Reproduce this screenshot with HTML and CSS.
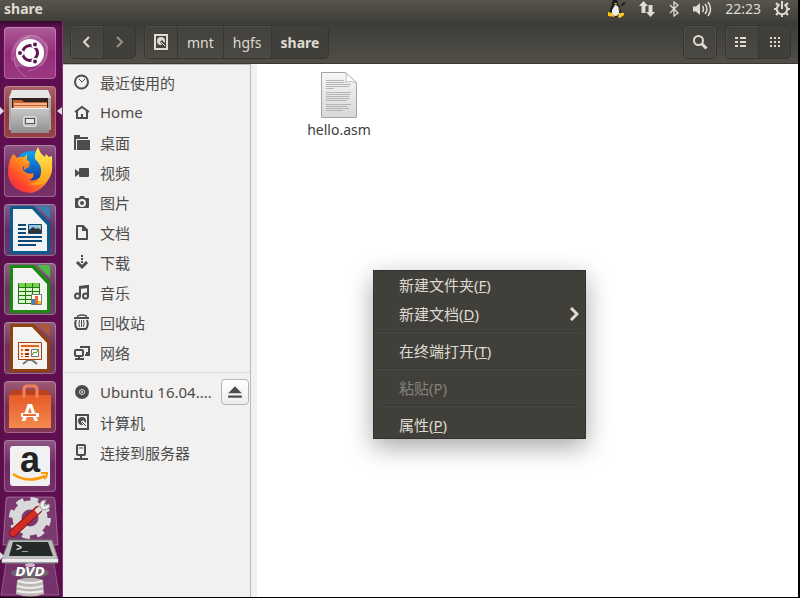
FILE: index.html
```
<!DOCTYPE html>
<html lang="zh-CN">

<head>
    <meta charset="UTF-8">
    <meta name="viewport" content="width=device-width, initial-scale=1.0">
    <title>share</title>
    <link rel="stylesheet" href="styles.css">
</head>

<body>

    <!-- Top panel -->
    <header class="panel">
        <span class="panel-title">share</span>
        <div class="indicators">
            <svg width="20" height="20" viewBox="0 0 20 20">
                <path d="M6 6Q6 0 9 0t3 5q3 4 3 8t-5 5-6-3 2-9z" fill="#1b1b1b"/>
                <path d="M9 6q3 0 4 4 1 6-3 7-5 0-4-6z" fill="#eee"/>
                <path d="M8 4h3l-1 2z" fill="#f6b91c"/>
                <path d="M2 13l4 1 3 4-7-1zM12 18l1-4 5 0 0 2-4 3z" fill="#fcc521"/>
                <path d="M13 11l4-6 2-1" stroke="#222" stroke-width="2" fill="none"/>
                <path d="M13 11l3-4" stroke="#b4602b" stroke-width="1"/>
            </svg>
            <svg width="18" height="18" viewBox="0 0 18 18" fill="#dfdbd2">
                <path d="M5.500 1L10 6H7.500v7h-4V6H1zM12.500 17L8 12h2.500V5h4v7H17z"/>
            </svg>
            <svg width="12" height="18" viewBox="0 0 12 18" fill="none" stroke="#dfdbd2" stroke-width="1.300">
                <path d="M2 5l8 8-4 3V2l4 3-8 8"/>
            </svg>
            <svg width="21" height="18" viewBox="0 0 21 18" fill="none" stroke="#dfdbd2" stroke-width="1.500">
                <path d="M1 6.500h3L8 3v12l-4-3.500H1z" fill="#dfdbd2" stroke="none"/>
                <path d="M10.500 6q2 3 0 6M13 4q4 5 0 10M16 2q5 7 0 14"/>
            </svg>
            <span class="clock">22:23</span>
            <svg width="18" height="18" viewBox="0 0 18 18" fill="none" stroke="#dfdbd2">
                <path d="M6.500 4.500a5.200 5.200 0 1 0 5 0" stroke-width="2"/>
                <path d="M9 1v8" stroke-width="2"/>
                <path d="M1 9h3M14 9h3M9 14v3M3 3l2 2M15 3l-2 2M3 15l2-2M15 15l-2-2" stroke-width="2"/>
            </svg>
        </div>
    </header>

    <div class="desktop">

        <!-- Launcher -->
        <nav class="launcher">
            <button type="button" class="tile tile-dash" aria-label="Dash">
                <svg viewBox="0 0 52 52">
                    <path d="M12 40C2 22 14 6 28 8c10 1 17 10 16 20-1 4-3 8-6 11z" fill="#fff" fill-opacity=".15"/>
                    <path d="M20 12C26 4 40 10 44 22M42 16c4 14-4 26-18 28M8 34c-2-12 6-22 18-24M10 30c0 10 6 16 12 20" fill="none" stroke="#fff" stroke-opacity=".25" stroke-width="1"/>
                    <circle cx="26" cy="26" r="14" fill="#fff"/>
                    <circle cx="26" cy="26" r="7.500" fill="none" stroke="#5e1650" stroke-width="3"/>
                    <circle cx="17" cy="26" r="3" fill="#fff"/>
                    <circle cx="30.500" cy="18.200" r="3" fill="#fff"/>
                    <circle cx="30.500" cy="33.800" r="3" fill="#fff"/>
                    <circle cx="16" cy="26" r="2" fill="#5e1650"/>
                    <circle cx="31" cy="17.500" r="2" fill="#5e1650"/>
                    <circle cx="31" cy="34.500" r="2" fill="#5e1650"/>
                </svg>
            </button>
            <button type="button" class="tile tile-files running active" aria-label="Files">
                <svg viewBox="0 0 52 52">
                    <defs>
                        <linearGradient id="steel" x1="0" y1="0" x2="0" y2="1">
                            <stop offset="0" stop-color="#c9c9c9"/>
                            <stop offset="1" stop-color="#8f8f8f"/>
                        </linearGradient>
                    </defs>
                    <path d="M8 4h36l3 8v32H5V12z" fill="#a9a9a9"/>
                    <path d="M8 4h36l3 8H5z" fill="#e6e6e6"/>
                    <path d="M8 12h36v12H8z" fill="#2d2220"/>
                    <path d="M9 14h9l2 2h23v7H9z" fill="#c9602a"/>
                    <path d="M10 17h33v2H10zM10 20h33v2H10z" fill="#f4b38a"/>
                    <path d="M7 22h38v25H7z" fill="url(#steel)"/>
                    <path d="M7 22h38v1H7z" fill="#ececec"/>
                    <rect x="19.500" y="30.500" width="13" height="10" rx="2" fill="#c4c4c4" stroke="#dedede"/>
                    <rect x="21.500" y="32.500" width="9" height="5" fill="#e8e8e8" stroke="#555"/>
                </svg>
            </button>
            <button type="button" class="tile" aria-label="Firefox">
                <svg viewBox="0 0 52 52">
                    <defs>
                        <linearGradient id="fox" x1="1" y1="0" x2="0" y2="1">
                            <stop offset="0" stop-color="#fff04a"/>
                            <stop offset=".4" stop-color="#ff9a1c"/>
                            <stop offset=".7" stop-color="#ff4a2d"/>
                            <stop offset="1" stop-color="#e3175a"/>
                        </linearGradient>
                        <linearGradient id="globe" x1="0" y1="0" x2="0" y2="1">
                            <stop offset="0" stop-color="#0aa5f2"/>
                            <stop offset="1" stop-color="#1a2a94"/>
                        </linearGradient>
                        <linearGradient id="tail" x1="0" y1="0" x2="0" y2="1">
                            <stop offset="0" stop-color="#fff35a"/>
                            <stop offset="1" stop-color="#ff9c16"/>
                        </linearGradient>
                    </defs>
                    <circle cx="27" cy="23" r="17" fill="url(#globe)"/>
                    <path d="M9 9q3 2 4 4 4-2 7-1l3-3v6q3 2 3 3l-6 3q-3 2 0 5 4 4 9 2 2 5-4 7 8 2 13-5 4-7-2-15l12-4q2 30-20 37Q6 47 4 29 4 16 9 9z" fill="url(#fox)"/>
                    <path d="M34 2q-4 7-3 12 7 6 6 14-1 10-12 11 15 4 21-7 5-10-1-20-2-2-3-3-1 2-1 3-5-3-7-10z" fill="url(#tail)"/>
                    <path d="M20 21l6-3-1 4-5 3z" fill="#ff7a20"/>
                </svg>
            </button>
            <button type="button" class="tile tile-writer" aria-label="Writer">
                <svg viewBox="0 0 52 52">
                    <path d="M8 2h22l16 17v29q0 2-2 2H8q-2 0-2-2V4q0-2 2-2z" fill="#0d5a8c"/>
                    <path d="M33 2h11q2 0 2 2v11z" fill="#3c7fae"/>
                    <path d="M9 5h19l15 16v26H9z" fill="#f3f3f3"/>
                    <path d="M14 20h8v2h-8zM14 24h8v2h-8zM14 28h8v2h-8zM14 32h24v2H14zM14 36h24v2H14zM14 40h18v2H14z" fill="#0d4a78"/>
                    <path d="M24.500 20.500h13v9h-13z" fill="#8fc3ea" stroke="#0d4a78"/>
                    <path d="M25 29v-3l4-3 3 2 2-1 3 2v3z" fill="#333"/>
                    <circle cx="35.500" cy="22.500" r="1" fill="#f6d437"/>
                </svg>
            </button>
            <button type="button" class="tile tile-calc" aria-label="Calc">
                <svg viewBox="0 0 52 52">
                    <path d="M8 2h22l16 17v29q0 2-2 2H8q-2 0-2-2V4q0-2 2-2z" fill="#1c8a12"/>
                    <path d="M33 2h11q2 0 2 2v11z" fill="#54b844"/>
                    <path d="M9 5h19l15 16v26H9z" fill="#f3f3f3"/>
                    <path d="M14.500 20.500h21v20h-21z" fill="#d9f7c8" stroke="#1c7a12"/>
                    <path d="M15 20h20v4H15z" fill="#75d34e"/>
                    <path d="M14 24.500h21M14 28.500h21M14 32.500h21M14 36.500h21M21.500 20v20M28.500 20v20" stroke="#1c7a12" fill="none"/>
                    <path d="M27.500 31.500h10v10h-10z" fill="#fff" stroke="#777"/>
                    <path d="M28 36h3v5h-3z" fill="#2f8bd0"/>
                    <path d="M31 33h3v8h-3z" fill="#ef6a1e"/>
                    <path d="M34 38h3v3h-3z" fill="#f3c521"/>
                </svg>
            </button>
            <button type="button" class="tile tile-impress" aria-label="Impress">
                <svg viewBox="0 0 52 52">
                    <path d="M8 2h22l16 17v29q0 2-2 2H8q-2 0-2-2V4q0-2 2-2z" fill="#91400f"/>
                    <path d="M33 2h11q2 0 2 2v11z" fill="#a9583a"/>
                    <path d="M9 5h19l15 16v26H9z" fill="#f3f3f3"/>
                    <path d="M19 42l5-4h4l5 4" fill="none" stroke="#777" stroke-width="2"/>
                    <path d="M14.500 20.500h23v17h-23z" fill="#fdece2" stroke="#a8420d"/>
                    <path d="M17 23h18v2H17z" fill="#e0641f"/>
                    <path d="M17 27h2v2h-2zM17 31h2v2h-2zM17 34h2v1h-2z" fill="#e0641f"/>
                    <path d="M21 27h4v2h-4zM21 31h4v2h-4zM21 34h4v1h-4z" fill="#8a3a0d"/>
                    <path d="M27.500 27.500h7v7h-7z" fill="#fff" stroke="#777"/>
                    <path d="M28 33l2-3 2 1 2-3" fill="none" stroke="#2c9a20"/>
                </svg>
            </button>
            <button type="button" class="tile tile-software" aria-label="Software">
                <svg viewBox="0 0 52 52">
                    <defs>
                        <linearGradient id="bag" x1="0" y1="0" x2="0" y2="1">
                            <stop offset="0" stop-color="#e55a27"/>
                            <stop offset="1" stop-color="#f48a4d"/>
                        </linearGradient>
                    </defs>
                    <path d="M8 9h36l3 6H5z" fill="#b9431f"/>
                    <path d="M5 14h42v33H5z" fill="url(#bag)"/>
                    <path d="M20 17V9q0-4 3-4h7q3 0 3 4v8" fill="none" stroke="#f0825b" stroke-width="3"/>
                    <text x="26" y="40" text-anchor="middle" class="bag-letter">A</text>
                    <path d="M17 32h18v4H17z" fill="#fff"/>
                    <path d="M19 33h13v2H19z" fill="#e86d35"/>
                </svg>
            </button>
            <button type="button" class="tile tile-amazon" aria-label="Amazon">
                <svg viewBox="0 0 52 52">
                    <rect x="6" y="6" width="40" height="40" rx="3" fill="#f1f1f1"/>
                    <text x="26" y="32" text-anchor="middle" class="amazon-letter">a</text>
                    <path d="M9 34q15 10 32 2" fill="none" stroke="#f90" stroke-width="2.500"/>
                    <path d="M37 33h6q0 4-3 6" fill="none" stroke="#f90" stroke-width="2"/>
                </svg>
            </button>
            <!-- Folded items at the end of the launcher -->
            <button type="button" class="stack" aria-label="Settings, Terminal, DVD">
                <svg viewBox="0 0 62 100">
                    <path d="M8-2h44q3 0 3 3l3 45H3L6 1q0-3 2-3z" fill="#fff" fill-opacity=".18" stroke="#fff" stroke-opacity=".3"/>
                    <circle cx="30" cy="19" r="13" fill="none" stroke="#d9d9d9" stroke-width="9"/>
                    <circle cx="30" cy="19" r="18.500" fill="none" stroke="#d9d9d9" stroke-width="5" stroke-dasharray="7.500 7.030"/>
                    <path d="M13 34L38 11" stroke="#8e1513" stroke-width="8" stroke-linecap="round"/>
                    <path d="M13 34L38 11" stroke="#d32b25" stroke-width="6" stroke-linecap="round"/>
                    <path d="M36 13l8-7" stroke="#ddd" stroke-width="5"/>
                    <path d="M46 1q-7 0-6 7 3 5 9 1 1-2 0-4l-5 2 1-4z" fill="#eee" stroke="#999"/>
                    <path d="M6 64h48l5 32H1z" fill="#fff" fill-opacity=".15" stroke="#fff" stroke-opacity=".25"/>
                    <path d="M17 81q13-5 26 0l1 14q-14 5-28 0z" fill="#bdb8b3"/>
                    <path d="M18 82q12 4 24 0M17 87q13 4 26 0M17 92q13 3 26 0" fill="none" stroke="#eee" stroke-width="2"/>
                    <path d="M9 41h43l6 19v4H2v-4z" fill="#bdbdbd" stroke="#777"/>
                    <path d="M2 60h56v3H2z" fill="#ececec"/>
                    <path d="M13 43h35l5 14H9z" fill="#252a2b"/>
                    <text x="16" y="52" class="prompt">&gt;_</text>
                    <ellipse cx="30" cy="66" rx="5" ry="2" fill="#ccb5c8"/>
                    <ellipse cx="30" cy="74" rx="19" ry="5" fill="#6e6470"/>
                    <text x="30" y="77" text-anchor="middle" class="dvd">DVD</text>
                    <path d="M0 53l4 4-4 4z" fill="#ddd"/>
                </svg>
            </button>
        </nav>

        <!-- Files window -->
        <main class="window">
            <div class="toolbar">
                <div class="group">
                    <button type="button" class="tool" aria-label="Back">
                        <svg width="16" height="16" viewBox="0 0 16 16"><path d="M10 3L5 8l5 5" fill="none" stroke="#dfdbd2" stroke-width="2"/></svg>
                    </button>
                    <button type="button" class="tool pressed" aria-label="Forward" disabled>
                        <svg width="16" height="16" viewBox="0 0 16 16"><path d="M5 3l5 5-5 5" fill="none" stroke="#96938b" stroke-width="2"/></svg>
                    </button>
                </div>
                <div class="group path">
                    <button type="button" class="tool" aria-label="Computer">
                        <svg width="16" height="16" viewBox="0 0 16 16">
                            <path d="M2 1h12v14H2z" fill="none" stroke="#dfdbd2" stroke-width="2"/>
                            <circle cx="8" cy="7" r="4" fill="#dfdbd2"/>
                            <path d="M8 7l4 5" stroke="#44423c" stroke-width="3"/>
                            <path d="M8 8l4 4" stroke="#dfdbd2" stroke-width="1"/>
                        </svg>
                    </button>
                    <button type="button" class="tool crumb">mnt</button>
                    <button type="button" class="tool crumb">hgfs</button>
                    <button type="button" class="tool crumb current">share</button>
                </div>
                <div class="group search">
                    <button type="button" class="tool" aria-label="Search">
                        <svg width="16" height="16" viewBox="0 0 16 16" fill="none" stroke="#dfdbd2">
                            <circle cx="6.500" cy="6.500" r="4.500" stroke-width="2"/>
                            <path d="M10 10l4.500 4.500" stroke-width="3"/>
                        </svg>
                    </button>
                </div>
                <div class="group">
                    <button type="button" class="tool" aria-label="List view">
                        <svg width="16" height="16" viewBox="0 0 16 16" fill="#dfdbd2">
                            <path d="M1 3h3v2H1zM6 3h6v2H6zM1 7h3v2H1zM6 7h6v2H6zM1 11h3v2H1zM6 11h6v2H6z"/>
                        </svg>
                    </button>
                    <button type="button" class="tool pressed" aria-label="Icon view">
                        <svg width="16" height="16" viewBox="0 0 16 16" fill="#dfdbd2">
                            <path d="M3 3h2v2H3zM7 3h2v2H7zM11 3h2v2h-2zM3 7h2v2H3zM7 7h2v2H7zM11 7h2v2h-2zM3 11h2v2H3zM7 11h2v2H7zM11 11h2v2h-2z"/>
                        </svg>
                    </button>
                </div>
            </div>

            <div class="content">
                <aside class="sidebar">
                    <ul class="places">
                        <li><a href="#">
                            <svg viewBox="0 0 16 16"><circle cx="7.500" cy="8" r="6.500" fill="none" stroke="#4c4c4c" stroke-width="2"/><path d="M5 5l3 3 3-3" fill="none" stroke="#4c4c4c"/></svg>
                            最近使用的</a></li>
                        <li><a href="#">
                            <svg viewBox="0 0 16 16"><path d="M1 8l7-5 7 5" fill="none" stroke="#4c4c4c" stroke-width="2"/><path d="M3 7v7h10V7" fill="none" stroke="#4c4c4c" stroke-width="2"/><path d="M7 10h2v4H7z" fill="#4c4c4c"/></svg>
                            Home</a></li>
                        <li><a href="#">
                            <svg viewBox="0 0 16 16" fill="#4c4c4c"><path d="M0 1h6v2h8v2H2v11H0zM3 6h13v10H3z"/></svg>
                            桌面</a></li>
                        <li><a href="#">
                            <svg viewBox="0 0 16 16" fill="#4c4c4c"><path d="M1 5l4 3v2l-4 3z"/><rect x="5" y="4" width="10" height="9" rx="1"/></svg>
                            视频</a></li>
                        <li><a href="#">
                            <svg viewBox="0 0 16 16"><path d="M2 4h3l1-2h4l1 2h3q1 0 1 1v8q0 1-1 1H2q-1 0-1-1V5q0-1 1-1z" fill="#4c4c4c"/><circle cx="8" cy="9" r="3" fill="none" stroke="#f2f1f0" stroke-width="2"/></svg>
                            图片</a></li>
                        <li><a href="#">
                            <svg viewBox="0 0 16 16"><path d="M3 2h6l4 4v9H3z" fill="none" stroke="#4c4c4c" stroke-width="2" stroke-linejoin="round"/><path d="M8 2v5h5z" fill="#4c4c4c"/></svg>
                            文档</a></li>
                        <li><a href="#">
                            <svg viewBox="0 0 16 16"><path d="M7 1h2v2H7zM7 4h2v2H7zM7 7h2v2H7z" fill="#4c4c4c"/><path d="M3 8l5 5 5-5" fill="none" stroke="#4c4c4c" stroke-width="3"/></svg>
                            下载</a></li>
                        <li><a href="#">
                            <svg viewBox="0 0 16 16" fill="none" stroke="#4c4c4c" stroke-width="2"><circle cx="3.500" cy="12" r="2.500"/><circle cx="11.500" cy="12" r="2.500"/><path d="M6 12V3l8-1v10M6 4l8-1"/></svg>
                            音乐</a></li>
                        <li><a href="#">
                            <svg viewBox="0 0 16 16" fill="none" stroke="#4c4c4c"><path d="M3.500 3q0-2 4.500-2t4.500 2" stroke-width="1.500"/><path d="M0 4h15" stroke-width="2"/><path d="M2 6q-2 5 1 9h9q3-4 1-9" stroke-width="2"/><path d="M5.500 6q-1 4 0 7M7.500 6v7M9.500 6q1 4 0 7"/></svg>
                            回收站</a></li>
                        <li><a href="#">
                            <svg viewBox="0 0 16 16" fill="none" stroke="#4c4c4c" stroke-width="2"><path d="M7 4V3h8v6h-3"/><rect x="1" y="6" width="8" height="6" rx="1"/><path d="M1 15h9M5 12v3M11 11h5" /></svg>
                            网络</a></li>
                    </ul>
                    <ul class="places devices">
                        <li><a href="#">
                            <svg viewBox="0 0 16 16"><circle cx="8" cy="8" r="7" fill="#4c4c4c"/><circle cx="8" cy="8" r="2.500" fill="#4c4c4c" stroke="#ddd"/><circle cx="8" cy="8" r="1" fill="#ddd"/></svg>
                            <span class="name">Ubuntu 16.04....</span></a>
                            <button type="button" class="eject" aria-label="Eject">
                                <svg width="14" height="14" viewBox="0 0 14 14" fill="#4c4c4c"><path d="M7 2l6 6H1zM1 10h12v2H1z"/></svg>
                            </button>
                        </li>
                        <li><a href="#">
                            <svg viewBox="0 0 16 16"><path d="M2 1h12v14H2z" fill="none" stroke="#4c4c4c" stroke-width="2"/><circle cx="8" cy="7" r="4" fill="#4c4c4c"/><path d="M8 7l4 5" stroke="#f2f1f0" stroke-width="3"/><path d="M8 8l4 4" stroke="#4c4c4c"/></svg>
                            计算机</a></li>
                        <li><a href="#">
                            <svg viewBox="0 0 16 16" fill="none" stroke="#4c4c4c" stroke-width="2"><rect x="3" y="1" width="8" height="10" rx="1"/><path d="M5 4h4" stroke-width="1"/><path d="M7 11v4M0 15h14"/></svg>
                            连接到服务器</a></li>
                    </ul>
                </aside>

                <section class="files">
                    <a href="#" class="file">
                        <svg width="36" height="46" viewBox="0 0 36 46">
                            <defs>
                                <linearGradient id="paper" x1="0" y1="0" x2="0" y2="1">
                                    <stop offset="0" stop-color="#f6f6f6"/>
                                    <stop offset="1" stop-color="#d8d8d8"/>
                                </linearGradient>
                            </defs>
                            <path d="M.5.5h24l11 10v35H.5z" fill="url(#paper)" stroke="#a5a5a5"/>
                            <path d="M24.500.5q2 5 0 10 6-2 11 0z" fill="#fff" stroke="#bbb"/>
                            <path d="M5 8.500h18M5 10.500h18M5 12.500h25M5 14.500h23M5 16.500h8M5 20.500h25M5 22.500h24M5 24.500h23M5 26.500h24M5 28.500h21M5 32.500h25M5 34.500h21M5 36.500h23M5 38.500h17" stroke="#b5b5b5"/>
                        </svg>
                        <span>hello.asm</span>
                    </a>
                </section>
            </div>
        </main>
    </div>

    <!-- Context menu -->
    <div class="menu" role="menu">
        <button type="button" role="menuitem">新建文件夹(<u>F</u>)</button>
        <button type="button" role="menuitem">新建文档(<u>D</u>)
            <svg width="10" height="14" viewBox="0 0 10 14"><path d="M2 1l6 6-6 6" fill="none" stroke="#dfdbd2" stroke-width="3"/></svg>
        </button>
        <hr>
        <button type="button" role="menuitem">在终端打开(<u>T</u>)</button>
        <hr>
        <button type="button" role="menuitem" disabled>粘贴(P)</button>
        <hr>
        <button type="button" role="menuitem">属性(<u>P</u>)</button>
    </div>

</body>

</html>
```

FILE: styles.css
```
* {
    box-sizing: border-box;
}

body {
    display: flex;
    flex-direction: column;
    height: 100vh;
    margin: 0;
    overflow: hidden;
    border-right: 2px solid #000;
    border-bottom: 1px solid #000;
    font-family: 'Noto Sans', 'Noto Sans CJK SC', sans-serif;
    font-size: 15px;
    color: #4c4c4c;
    background-color: #fff;
}

button {
    margin: 0;
    padding: 0;
    border: none;
    background: none;
    font: inherit;
    color: inherit;
}

a {
    color: inherit;
    text-decoration: none;
}

svg {
    display: block;
    flex: none;
}

/* Top panel */
.panel {
    display: flex;
    align-items: center;
    justify-content: space-between;
    height: 21px;
    padding: 0 7px 3px 4px;
    background: linear-gradient(#57544c, #403f3a);
    color: #dfdbd2;
}

.panel-title {
    font-size: 14px;
    line-height: 18px;
    font-weight: bold;
}

.indicators {
    display: flex;
    align-items: center;
    gap: 12px;
    line-height: 18px;
}

.clock {
    font-size: 14px;
}

.desktop {
    display: flex;
    flex: 1;
    min-height: 0;
}

/* Launcher */
.launcher {
    display: flex;
    flex-direction: column;
    gap: 7px;
    width: 63px;
    padding: 6px 0 0 4px;
    overflow: hidden;
    border-right: 1px solid #7d3872;
    background-color: #5f0f50;
    box-shadow: inset 0 5px 4px -2px #350a2d;
}

.launcher svg {
    overflow: visible;
}

.tile {
    flex: none;
    position: relative;
    width: 52px;
    height: 52px;
    border-radius: 4px;
    background: linear-gradient(rgba(255, 255, 255, 0.3), rgba(255, 255, 255, 0.1) 50%, rgba(255, 255, 255, 0.15));
    box-shadow: inset 0 0 0 1px rgba(255, 255, 255, 0.25);
}

.tile-dash {
    background-color: #8a156c;
}

.tile-files {
    background-color: #86202a;
}

.tile-writer {
    background-color: #4a1a58;
}

.tile-calc {
    background-color: #53244a;
}

.tile-impress {
    background-color: #601a40;
}

.tile-software {
    background-color: #70153c;
}

/* Small arrows next to a running application */
.running::before,
.active::after {
    content: '';
    position: absolute;
    top: 21px;
    border: 4px solid transparent;
}

.running::before {
    left: -4px;
    border-left-color: #ddd;
    border-right-width: 0;
}

.active::after {
    right: -6px;
    border-right-color: #ddd;
    border-right-width: 5px;
    border-left-width: 0;
}

.bag-letter {
    font: bold 24px 'Liberation Sans', sans-serif;
    fill: #fff;
}

.amazon-letter {
    font: bold 36px 'Liberation Sans', sans-serif;
    fill: #222;
}

.stack {
    flex: none;
    width: 62px;
    height: 100px;
    margin-left: -4px;
}

.prompt {
    font: bold 10px 'Liberation Mono', monospace;
    fill: #e8e8e8;
}

.dvd {
    font: italic bold 12px 'DejaVu Sans', sans-serif;
    fill: #fff;
}

/* Window */
.window {
    display: flex;
    flex-direction: column;
    flex: 1;
    min-width: 0;
}

.toolbar {
    display: flex;
    align-items: center;
    gap: 8px;
    height: 43px;
    padding: 0 7px;
    border-bottom: 1px solid #393834;
    background: linear-gradient(#3c3b37, #504e47);
    color: #dfdbd2;
}

.group {
    display: flex;
    height: 34px;
    border: 1px solid #36352f;
    border-radius: 5px;
    box-shadow: inset 0 0 0 1px #504e48;
    background: linear-gradient(#42413c, #4b4943);
}

.search {
    margin-left: auto;
}

.tool {
    display: flex;
    align-items: center;
    justify-content: center;
    width: 32px;
}

.tool + .tool {
    border-left: 1px solid #36352f;
}

.pressed {
    background-color: #403f3a;
    border-radius: 0 4px 4px 0;
}

.crumb {
    width: auto;
    padding: 0 9px;
    font-size: 14px;
}

.current {
    font-weight: bold;
    background-color: #403f3a;
    border-radius: 0 4px 4px 0;
}

.content {
    display: flex;
    flex: 1;
    min-height: 0;
}

.sidebar {
    width: 188px;
    padding-top: 2px;
    border-top: 1px solid #bab9b8;
    border-right: 1px solid #bab9b8;
    background-color: #f2f1f0;
}

.places {
    margin: 0;
    padding: 0;
    list-style: none;
}

.places li {
    display: flex;
    align-items: center;
    height: 30px;
    padding: 0 1px 0 11px;
}

.places a {
    display: flex;
    align-items: center;
    flex: 1;
    gap: 10px;
    min-width: 0;
}

.places svg {
    width: 16px;
    height: 16px;
}

.devices {
    margin-top: 5px;
    padding-top: 4px;
    border-top: 1px solid #dad9d8;
}

.name {
    white-space: nowrap;
}

.eject {
    display: flex;
    flex: none;
    align-items: center;
    justify-content: center;
    width: 28px;
    height: 26px;
    border: 1px solid #b5b4b3;
    border-radius: 4px;
    background: linear-gradient(#fff, #ececeb);
}

.files {
    flex: 1;
    padding: 8px 16px;
    border-left: 6px solid #f2f1f0;
    background-color: #fff;
}

.file {
    display: flex;
    flex-direction: column;
    align-items: center;
    gap: 2px;
    width: 132px;
    line-height: 20px;
    font-size: 14px;
    color: #3c3c3c;
}

/* Context menu */
.menu {
    position: absolute;
    left: 373px;
    top: 270px;
    width: 213px;
    background-color: #403f3a;
    color: #dfdbd2;
    box-shadow: inset 0 0 0 1px #33322e, 0 8px 24px rgba(0, 0, 0, 0.35);
}

.menu button {
    display: flex;
    align-items: center;
    width: 100%;
    height: 29px;
    padding: 0 7px 0 26px;
}

.menu button svg {
    margin-left: auto;
}

.menu button:disabled {
    color: #85827b;
}

.menu hr {
    height: 2px;
    margin: 3px 5px;
    border: none;
    border-top: 1px solid #393834;
    border-bottom: 1px solid #484741;
}
```
